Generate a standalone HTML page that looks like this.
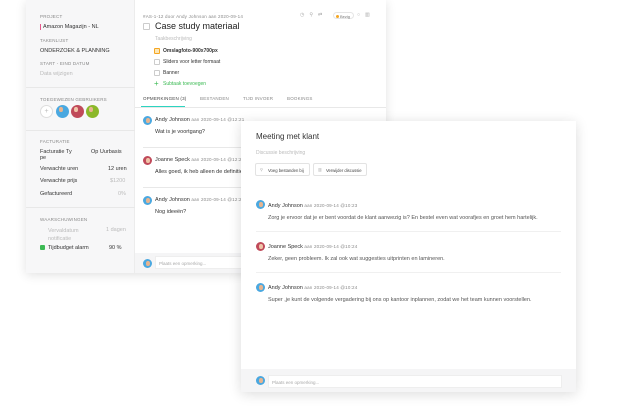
<!DOCTYPE html>
<html><head><meta charset="utf-8"><style>
*{margin:0;padding:0;box-sizing:border-box}
body{width:620px;height:412px;background:#fff;font-family:"Liberation Sans",sans-serif;position:relative;overflow:hidden;color:#333}
.a{position:absolute;white-space:nowrap}
.back{position:absolute;left:26px;top:0;width:360px;height:273px;background:#fff;box-shadow:0 2px 10px rgba(0,0,0,.12)}
.side{position:absolute;left:0;top:0;width:109px;height:273px;background:#f7f7f8;border-right:1px solid #ececec}
.lab{font-size:4.5px;color:#888;letter-spacing:.2px}
.t{font-size:5.5px;color:#333}
.g{color:#bbb}
.hr{position:absolute;height:1px;background:#e8e8e8}
.av{position:absolute;width:9px;height:9px;border-radius:50%;background:#4aa8e0;overflow:hidden}
.av::after{content:"";position:absolute;left:2.5px;top:1.5px;width:4px;height:5px;border-radius:45%;background:#e7b48f}
.av.j{background:#c04a5a}
.av.j::after{background:#f0c4a8}
.cb{position:absolute;width:6px;height:6px;border:1px solid #ccc;border-radius:1px;background:#fff}
.modal{position:absolute;left:241px;top:121px;width:335px;height:271px;background:#fff;box-shadow:0 2px 12px rgba(0,0,0,.14)}
.btn{position:absolute;height:13px;border:1px solid #e3e3e3;border-radius:2px;font-size:4.2px;color:#444;padding:3.5px 0 0 12px;white-space:nowrap;overflow:hidden}
</style></head><body>
<div class="back">
 <div class="side">
  <div class="a lab" style="left:14px;top:14px">PROJECT</div>
  <div class="a" style="left:14px;top:24px;width:1px;height:6px;background:#e5588a"></div>
  <div class="a t" style="left:17px;top:24px">Amazon Magazijn - NL</div>
  <div class="a lab" style="left:14px;top:38px">TAKENLIJST</div>
  <div class="a t" style="left:14px;top:48px">ONDERZOEK &amp; PLANNING</div>
  <div class="a lab" style="left:14px;top:61px">START - EIND DATUM</div>
  <div class="a t g" style="left:14px;top:71px">Data wijzigen</div>
  <div class="hr" style="left:0;top:87px;width:109px"></div>
  <div class="a lab" style="left:14px;top:97px">TOEGEWEZEN GEBRUIKERS</div>
  <div class="a" style="left:14px;top:105px;width:13px;height:13px;border-radius:50%;border:1px solid #ddd;background:#fff;font-size:7px;color:#bbb;text-align:center;line-height:11px">+</div>
  <div class="av" style="left:30px;top:105px;width:13px;height:13px"></div>
  <div class="av j" style="left:45px;top:105px;width:13px;height:13px"></div>
  <div class="av" style="left:60px;top:105px;width:13px;height:13px;background:#8bb82a"></div>
  <div class="hr" style="left:0;top:130px;width:109px"></div>
  <div class="a lab" style="left:14px;top:139px">FACTURATIE</div>
  <div class="a t" style="left:14px;top:149px">Facturatie Ty<br>pe</div>
  <div class="a t" style="left:65px;top:149px">Op Uurbasis</div>
  <div class="a t" style="left:14px;top:166px">Verwachte uren</div>
  <div class="a t" style="left:82px;top:166px">12 uren</div>
  <div class="a t" style="left:14px;top:178px">Verwachte prijs</div>
  <div class="a t g" style="left:84px;top:178px">$1200</div>
  <div class="a t" style="left:14px;top:191px">Gefactureerd</div>
  <div class="a t g" style="left:92px;top:191px">0%</div>
  <div class="hr" style="left:0;top:207px;width:109px"></div>
  <div class="a lab" style="left:14px;top:217px">WAARSCHUWINGEN</div>
  <div class="a t g" style="left:22px;top:227px;line-height:8px">Vervaldatum<br>notificatie</div>
  <div class="a t g" style="left:80px;top:227px">1 dagen</div>
  <div class="a" style="left:14px;top:245px;width:5px;height:5px;background:#3cba54;border-radius:1px"></div>
  <div class="a t" style="left:22px;top:245px">Tijdbudget alarm</div>
  <div class="a t" style="left:83px;top:245px">90 %</div>
 </div>
 <div class="a lab" style="left:117px;top:14px">#AS-1-12 door Andy Johnson aan 2020-09-14</div>
 <div class="a" style="left:274px;top:12px;font-size:5px;color:#aaa;letter-spacing:5px">◷⚲⇄</div>
 <div class="a" style="left:307px;top:12px;width:21px;height:7px;border:1px solid #e5e5e5;border-radius:4px;font-size:4px;color:#777;padding:1px 0 0 6px"><span style="position:absolute;left:2px;top:2px;width:3px;height:3px;border-radius:50%;background:#f5a623"></span>Bezig</div>
 <div class="a" style="left:331px;top:12px;font-size:5px;color:#aaa;letter-spacing:5px">○▥</div>
 <div class="cb" style="left:117px;top:23px;width:7px;height:7px"></div>
 <div class="a" style="left:129px;top:21px;font-size:9px;color:#222">Case study materiaal</div>
 <div class="a t g" style="left:129px;top:36px;font-size:5px">Taakbeschrijving</div>
 <div class="cb" style="left:128px;top:48px;border-color:#f5a623;background:#fce7b8"></div>
 <div class="a t" style="left:137px;top:48px;font-weight:bold;font-size:5px">Omslagfoto-900x700px</div>
 <div class="cb" style="left:128px;top:59px"></div>
 <div class="a t" style="left:137px;top:59px;font-size:5px">Sliders voor letter formaat</div>
 <div class="cb" style="left:128px;top:70px"></div>
 <div class="a t" style="left:137px;top:70px;font-size:5px">Banner</div>
 <div class="a" style="left:128px;top:79px;font-size:8px;color:#3cba54">+</div>
 <div class="a" style="left:137px;top:81px;font-size:5px;color:#3cba54">Subtaak toevoegen</div>
 <div class="a lab" style="left:117px;top:96px;color:#444">OPMERKINGEN (3)</div>
 <div class="a lab" style="left:174px;top:96px">BESTANDEN</div>
 <div class="a lab" style="left:217px;top:96px">TIJD INVOER</div>
 <div class="a lab" style="left:261px;top:96px">BOOKINGS</div>
 <div class="a" style="left:115px;top:106px;width:44px;height:1px;background:#2dd4c0"></div>
 <div class="hr" style="left:109px;top:107px;width:251px"></div>
 <div class="av" style="left:117px;top:116px"></div>
 <div class="a t" style="left:129px;top:117px">Andy Johnson <span class="lab">aan 2020-09-14 @12:21</span></div>
 <div class="a t" style="left:129px;top:129px">Wat is je voortgang?</div>
 <div class="hr" style="left:117px;top:147px;width:243px"></div>
 <div class="av j" style="left:117px;top:156px"></div>
 <div class="a t" style="left:129px;top:157px">Joanne Speck <span class="lab">aan 2020-09-14 @12:21</span></div>
 <div class="a t" style="left:129px;top:169px">Alles goed, ik heb alleen de definitieve</div>
 <div class="hr" style="left:117px;top:187px;width:243px"></div>
 <div class="av" style="left:117px;top:196px"></div>
 <div class="a t" style="left:129px;top:197px">Andy Johnson <span class="lab">aan 2020-09-14 @12:22</span></div>
 <div class="a t" style="left:129px;top:209px">Nog ideeën?</div>
 <div class="a" style="left:109px;top:253px;width:251px;height:20px;background:#f5f5f6"></div>
 <div class="av" style="left:117px;top:259px"></div>
 <div class="a" style="left:129px;top:256px;width:220px;height:13px;background:#fff;border:1px solid #eee;font-size:4.5px;color:#aaa;padding:4px 3px">Plaats een opmerking...</div>
</div>
<div class="modal">
 <div class="a" style="left:15px;top:11px;font-size:8px;color:#333">Meeting met klant</div>
 <div class="a t g" style="left:15px;top:29px;font-size:5px">Discussie beschrijving</div>
 <div class="btn" style="left:14px;top:42px;width:55px"><span style="position:absolute;left:4px;top:3px;color:#aaa">⚲</span>Voeg bestanden bij</div>
 <div class="btn" style="left:72px;top:42px;width:54px"><span style="position:absolute;left:4px;top:3px;color:#aaa">▥</span>Verwijder discussie</div>
 <div class="av" style="left:15px;top:79px"></div>
 <div class="a t" style="left:27px;top:82px">Andy Johnson <span class="lab">aan 2020-09-14 @10:23</span></div>
 <div class="a t" style="left:27px;top:94px;color:#555">Zorg je ervoor dat je er bent voordat de klant aanwezig is? En bestel even wat voorafjes en groet hem hartelijk.</div>
 <div class="hr" style="left:15px;top:110px;width:305px;background:#f0f0f0"></div>
 <div class="av j" style="left:15px;top:121px"></div>
 <div class="a t" style="left:27px;top:123px">Joanne Speck <span class="lab">aan 2020-09-14 @10:24</span></div>
 <div class="a t" style="left:27px;top:135px;color:#555">Zeker, geen probleem. Ik zal ook wat suggesties uitprinten en lamineren.</div>
 <div class="hr" style="left:15px;top:151px;width:305px;background:#f0f0f0"></div>
 <div class="av" style="left:15px;top:162px"></div>
 <div class="a t" style="left:27px;top:164px">Andy Johnson <span class="lab">aan 2020-09-14 @10:24</span></div>
 <div class="a t" style="left:27px;top:176px;color:#555">Super ,je kunt de volgende vergadering bij ons op kantoor inplannen, zodat we het team kunnen voorstellen.</div>
 <div class="a" style="left:0;top:248px;width:335px;height:23px;background:#f5f5f6"></div>
 <div class="av" style="left:15px;top:255px"></div>
 <div class="a" style="left:27px;top:254px;width:294px;height:13px;background:#fff;border:1px solid #eee;font-size:4.5px;color:#aaa;padding:4px 3px">Plaats een opmerking...</div>
</div>
</body></html>
